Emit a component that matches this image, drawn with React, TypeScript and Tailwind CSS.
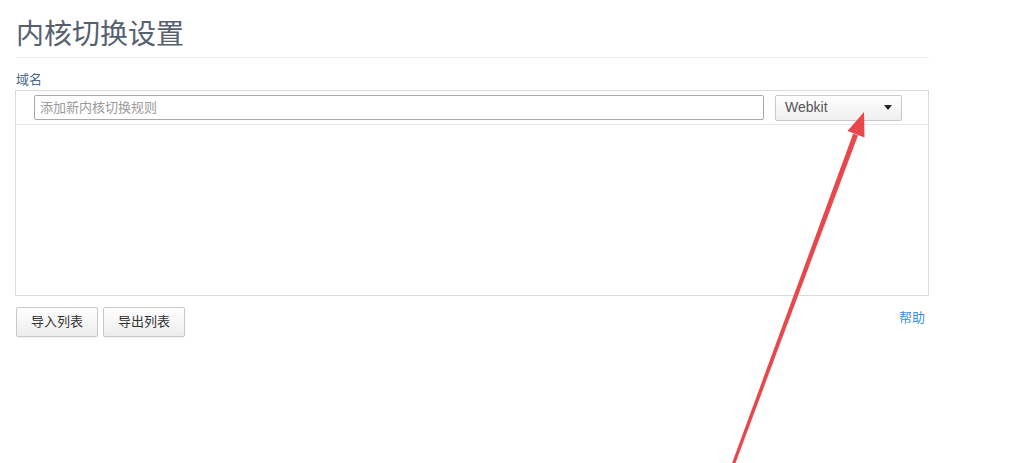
const fontStack = "font-['Liberation_Sans','Noto_Sans_CJK_SC',sans-serif]";

const Caret = () => (
  <span className="h-0 w-0 border-x-[4px] border-t-[5px] border-x-transparent border-t-[#222]" />
);

const ListButton: React.FC<{ label: string }> = ({ label }) => (
  <button className="h-[30px] w-[82px] rounded-[2px] border border-[#c8c8c8] bg-gradient-to-b from-white to-[#ededed] text-[13px] text-[#333] shadow-[0_1px_1px_rgba(0,0,0,0.05)]">
    {label}
  </button>
);

// annotation arrow drawn over the page
const RedArrow = () => (
  <svg
    className="pointer-events-none absolute inset-0"
    width="1033"
    height="463"
    viewBox="0 0 1033 463"
  >
    <polygon
      points="729.5,470 732.5,471 858,135.4 853.2,133.6"
      fill="#e8474b"
    />
    <polygon points="864,112 847.5,131 864.5,137.5" fill="#e8474b" />
  </svg>
);

export default function App() {
  return (
    <div className={`relative h-[463px] w-[1033px] overflow-hidden bg-white ${fontStack}`}>
      <div className="flex w-[929px] flex-col pl-[15px]">
        <h1 className="ml-px border-b border-[#ececec] pt-[21px] pb-[8px] text-[28px] leading-[28px] font-normal text-[#56606e]">
          内核切换设置
        </h1>

        <label className="mt-[14px] ml-px text-[13px] leading-[16px] text-[#4a6a8c]">
          域名
        </label>

        <div className="mt-[2px] flex h-[206px] flex-col border border-[#dcdcdc]">
          <div className="flex h-[34px] items-center gap-[11px] border-b border-[#e6e6e6] pl-[18px]">
            <input
              className="h-[25px] w-[730px] rounded-[2px] border border-[#a8a8a8] px-[5px] text-[13px] text-[#333] outline-none placeholder:text-[#9a9a9a]"
              placeholder="添加新内核切换规则"
            />
            <div className="flex h-[26px] w-[127px] items-center justify-between rounded-[2px] border border-[#c8c8c8] bg-gradient-to-b from-white to-[#efefef] pr-[9px] pl-[9px] text-[14px] text-[#555]">
              <span>Webkit</span>
              <Caret />
            </div>
          </div>
        </div>

        <div className="mt-[11px] flex items-start justify-between">
          <div className="flex gap-[5px] pl-px">
            <ListButton label="导入列表" />
            <ListButton label="导出列表" />
          </div>
          <a className="mt-[3px] mr-[4px] text-[13px] leading-[16px] text-[#3b8fe2]">帮助</a>
        </div>
      </div>

      <RedArrow />
    </div>
  );
}
